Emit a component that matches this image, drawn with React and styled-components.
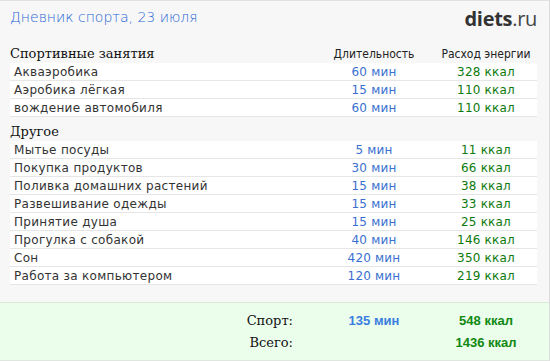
import styled, { createGlobalStyle } from "styled-components";

const GlobalStyle = createGlobalStyle`
  html, body {
    margin: 0;
    padding: 0;
    background: #ffffff;
  }
`;

const Page = styled.div`
  width: 550px;
  height: 361px;
  box-sizing: border-box;
  background: #f7f7f7;
  border-top: 1px solid #e2e2e2;
  border-right: 1px solid #dedede;
  display: flex;
  flex-direction: column;
`;

const Header = styled.div`
  display: flex;
  justify-content: space-between;
  align-items: flex-start;
  box-sizing: border-box;
  padding: 7px 12px 0 10px;
  height: 34px;
`;

const Title = styled.h1`
  margin: 0;
  font-family: "DejaVu Sans", sans-serif;
  font-weight: 200;
  font-size: 14px;
  line-height: 18px;
  color: #1f66d6;
`;

const Logo = styled.div`
  font-family: "Open Sans", "DejaVu Sans", sans-serif;
  font-size: 20px;
  line-height: 20px;
  margin-top: 1px;
  color: #333333;
  letter-spacing: -0.3px;

  b {
    font-weight: 700;
  }
  span {
    font-weight: 400;
    color: #444444;
  }
`;

const Body = styled.div`
  padding: 0 12px 0 10px;
  flex: 1;
`;

const Grid = styled.div`
  display: grid;
  grid-template-columns: 1fr 122px 102px;
  align-items: end;
`;

const HeadRow = styled(Grid)`
  height: ${(p) => p.$h}px;
  box-sizing: border-box;
  padding-bottom: 1px;
`;

const SectionTitle = styled.div`
  font-family: "DejaVu Serif", serif;
  font-size: 13px;
  color: #111111;
  line-height: 16px;
`;

const ColTitle = styled.div`
  font-family: "DejaVu Sans Condensed", "DejaVu Sans", sans-serif;
  font-size: 12px;
  color: #222222;
  text-align: center;
  line-height: 16px;
`;

const Row = styled(Grid)`
  height: 18px;
  box-sizing: border-box;
  background: #ffffff;
  border-bottom: 1px solid #e6e6e6;
  align-items: center;
  font-family: "DejaVu Sans", sans-serif;
  font-size: 12px;
`;

const Name = styled.div`
  padding-left: 4px;
  color: #333333;
  letter-spacing: 0.3px;
`;

const Cell = styled.div`
  text-align: center;
  color: ${(p) => p.$color};
  letter-spacing: 0.2px;
`;

const Footer = styled.div`
  background: #ebfdeb;
  border-top: 1px solid #d9ead9;
  border-bottom: 1px solid #dfe6df;
  padding: 6px 12px 6px 10px;
  margin-top: auto;
  height: 59px;
  box-sizing: border-box;
`;

const TotalRow = styled(Grid)`
  height: 22px;
  align-items: center;
`;

const TotalLabel = styled.div`
  font-family: "DejaVu Serif", serif;
  font-size: 13px;
  color: #111111;
  text-align: right;
  padding-right: 20px;
`;

const TotalValue = styled.div`
  font-family: "Liberation Sans", Arial, sans-serif;
  font-weight: 700;
  font-size: 13px;
  text-align: center;
  color: ${(p) => p.$color};
`;

const BLUE = "#3a6fd0";
const GREEN = "#0e7a0e";

const sport = [
  ["Акваэробика", "60 мин", "328 ккал"],
  ["Аэробика лёгкая", "15 мин", "110 ккал"],
  ["вождение автомобиля", "60 мин", "110 ккал"],
];

const other = [
  ["Мытье посуды", "5 мин", "11 ккал"],
  ["Покупка продуктов", "30 мин", "66 ккал"],
  ["Поливка домашних растений", "15 мин", "38 ккал"],
  ["Развешивание одежды", "15 мин", "33 ккал"],
  ["Принятие душа", "15 мин", "25 ккал"],
  ["Прогулка с собакой", "40 мин", "146 ккал"],
  ["Сон", "420 мин", "350 ккал"],
  ["Работа за компьютером", "120 мин", "219 ккал"],
];

const Rows = ({ items }) =>
  items.map(([name, dur, kcal]) => (
    <Row key={name}>
      <Name>{name}</Name>
      <Cell $color={BLUE}>{dur}</Cell>
      <Cell $color={GREEN}>{kcal}</Cell>
    </Row>
  ));

export default function App() {
  return (
    <>
      <GlobalStyle />
      <Page>
        <Header>
          <Title>Дневник спорта, 23 июля</Title>
          <Logo>
            <b>diets</b>
            <span>.ru</span>
          </Logo>
        </Header>
        <Body>
          <HeadRow $h={28}>
            <SectionTitle>Спортивные занятия</SectionTitle>
            <ColTitle>Длительность</ColTitle>
            <ColTitle>Расход энергии</ColTitle>
          </HeadRow>
          <Rows items={sport} />
          <HeadRow $h={24}>
            <SectionTitle>Другое</SectionTitle>
          </HeadRow>
          <Rows items={other} />
        </Body>
        <Footer>
          <TotalRow>
            <TotalLabel>Спорт:</TotalLabel>
            <TotalValue $color="#3a7ee0">135 мин</TotalValue>
            <TotalValue $color="#118811">548 ккал</TotalValue>
          </TotalRow>
          <TotalRow>
            <TotalLabel>Всего:</TotalLabel>
            <div />
            <TotalValue $color="#118811">1436 ккал</TotalValue>
          </TotalRow>
        </Footer>
      </Page>
    </>
  );
}
